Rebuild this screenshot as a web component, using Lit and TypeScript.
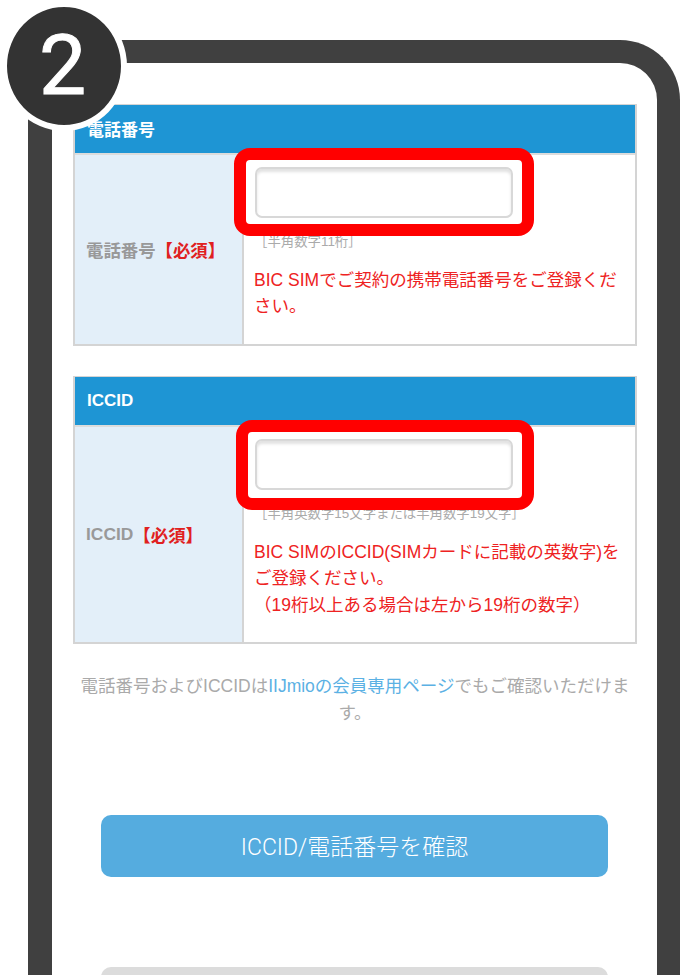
import { LitElement, html, css } from "lit";
import { customElement } from "lit/decorators.js";

@customElement("app-root")
export class AppRoot extends LitElement {
  static styles = css`
    :host {
      display: block;
      position: relative;
      height: 975px;
      overflow: hidden;
      background: #fff;
      font-family: "Liberation Sans", "Noto Sans CJK JP", sans-serif;
    }
    .badge {
      position: absolute;
      left: 1px;
      top: 1px;
      z-index: 3;
      box-sizing: border-box;
      width: 126px;
      height: 130px;
      padding-right: 3px;
      border: 6px solid #fff;
      border-radius: 50%;
      background: #333;
      color: #fff;
      display: flex;
      align-items: center;
      justify-content: center;
      font-family: Roboto, sans-serif;
      font-weight: 400;
      font-size: 84px;
      line-height: 1;
      -webkit-text-stroke: 1px #fff;
    }
    .frame {
      box-sizing: border-box;
      margin: 40px 0 0 28px;
      height: 935px;
      border: solid #404040;
      border-width: 23px 23px 0 24px;
      border-radius: 60px 60px 0 0;
      padding: 41px 20px 0 21px;
      overflow: hidden;
    }
    .table {
      border: 2px solid #d4d4d4;
      border-top-width: 1px;
    }
    .table + .table {
      margin-top: 30px;
    }
    .head {
      box-sizing: border-box;
      height: 50px;
      padding-left: 12px;
      display: flex;
      align-items: center;
      background: #1e95d4;
      border-bottom: 2px solid #dcdcdc;
      color: #fff;
      font-size: 17px;
      font-weight: 700;
    }
    .head.cjk {
      padding-bottom: 2px;
    }
    .row {
      display: grid;
      grid-template-columns: 169px 1fr;
    }
    .label {
      display: flex;
      align-items: center;
      padding-left: 11px;
      background: #e3eff9;
      border-right: 2px solid #d4d4d4;
      color: #999;
      font-size: 17.4px;
      font-weight: 700;
    }
    .label em {
      font-style: normal;
      color: #e02020;
    }
    .cell {
      padding: 12px 10px 24px 10px;
    }
    .field {
      position: relative;
      box-sizing: border-box;
      width: 258px;
      height: 51px;
      margin-left: 1px;
      border: 2px solid #d8d8d8;
      border-radius: 7px;
      background: #fff;
      box-shadow: inset 0 3px 3px #e2e2e2;
    }
    .ring {
      position: absolute;
      inset: -21px -23px -20px -23px;
      border: 12px solid #f00;
      border-radius: 16px;
      z-index: 2;
    }
    .ring.second {
      inset: -21px -23px -22px -21px;
    }
    .hint {
      margin-top: 14px;
      height: 20px;
      line-height: 20px;
      font-size: 13.4px;
      color: #aaa;
    }
    .warn {
      margin-top: 15px;
      font-size: 17.5px;
      line-height: 26.4px;
      color: #ee2222;
    }
    .note {
      margin: 29px 0 0;
      font-size: 17.5px;
      line-height: 27px;
      text-align: center;
      color: #aaa;
    }
    .note a {
      color: #5bb1e4;
      text-decoration: none;
    }
    .btn {
      box-sizing: border-box;
      width: 507px;
      height: 62px;
      margin-left: 28px;
      padding-bottom: 3px;
      border-radius: 10px;
      display: flex;
      align-items: center;
      justify-content: center;
      font-family: Roboto, "Noto Sans CJK JP", sans-serif;
      font-size: 23px;
      font-weight: 300;
      color: #fff;
    }
    .btn.primary {
      margin-top: 88px;
      background: #55acdf;
    }
    .btn.muted {
      margin-top: 90px;
      background: #dcdcdc;
    }
  `;

  render() {
    return html`
      <div class="badge">2</div>
      <div class="frame">
        <section class="table">
          <div class="head cjk">電話番号</div>
          <div class="row">
            <div class="label">電話番号<em>【必須】</em></div>
            <div class="cell">
              <div class="field"><div class="ring"></div></div>
              <div class="hint">［半角数字11桁］</div>
              <div class="warn">BIC SIMでご契約の携帯電話番号をご登録ください。</div>
            </div>
          </div>
        </section>
        <section class="table">
          <div class="head">ICCID</div>
          <div class="row">
            <div class="label">ICCID<em>【必須】</em></div>
            <div class="cell">
              <div class="field"><div class="ring second"></div></div>
              <div class="hint">［半角英数字15文字または半角数字19文字］</div>
              <div class="warn">
                BIC SIMのICCID(SIMカードに記載の英数字)をご登録ください。<br />（19桁以上ある場合は左から19桁の数字）
              </div>
            </div>
          </div>
        </section>
        <p class="note">
          電話番号およびICCIDは<a href="#">IIJmioの会員専用ページ</a>でもご確認いただけます。
        </p>
        <div class="btn primary">ICCID/電話番号を確認</div>
        <div class="btn muted"></div>
      </div>
    `;
  }
}
